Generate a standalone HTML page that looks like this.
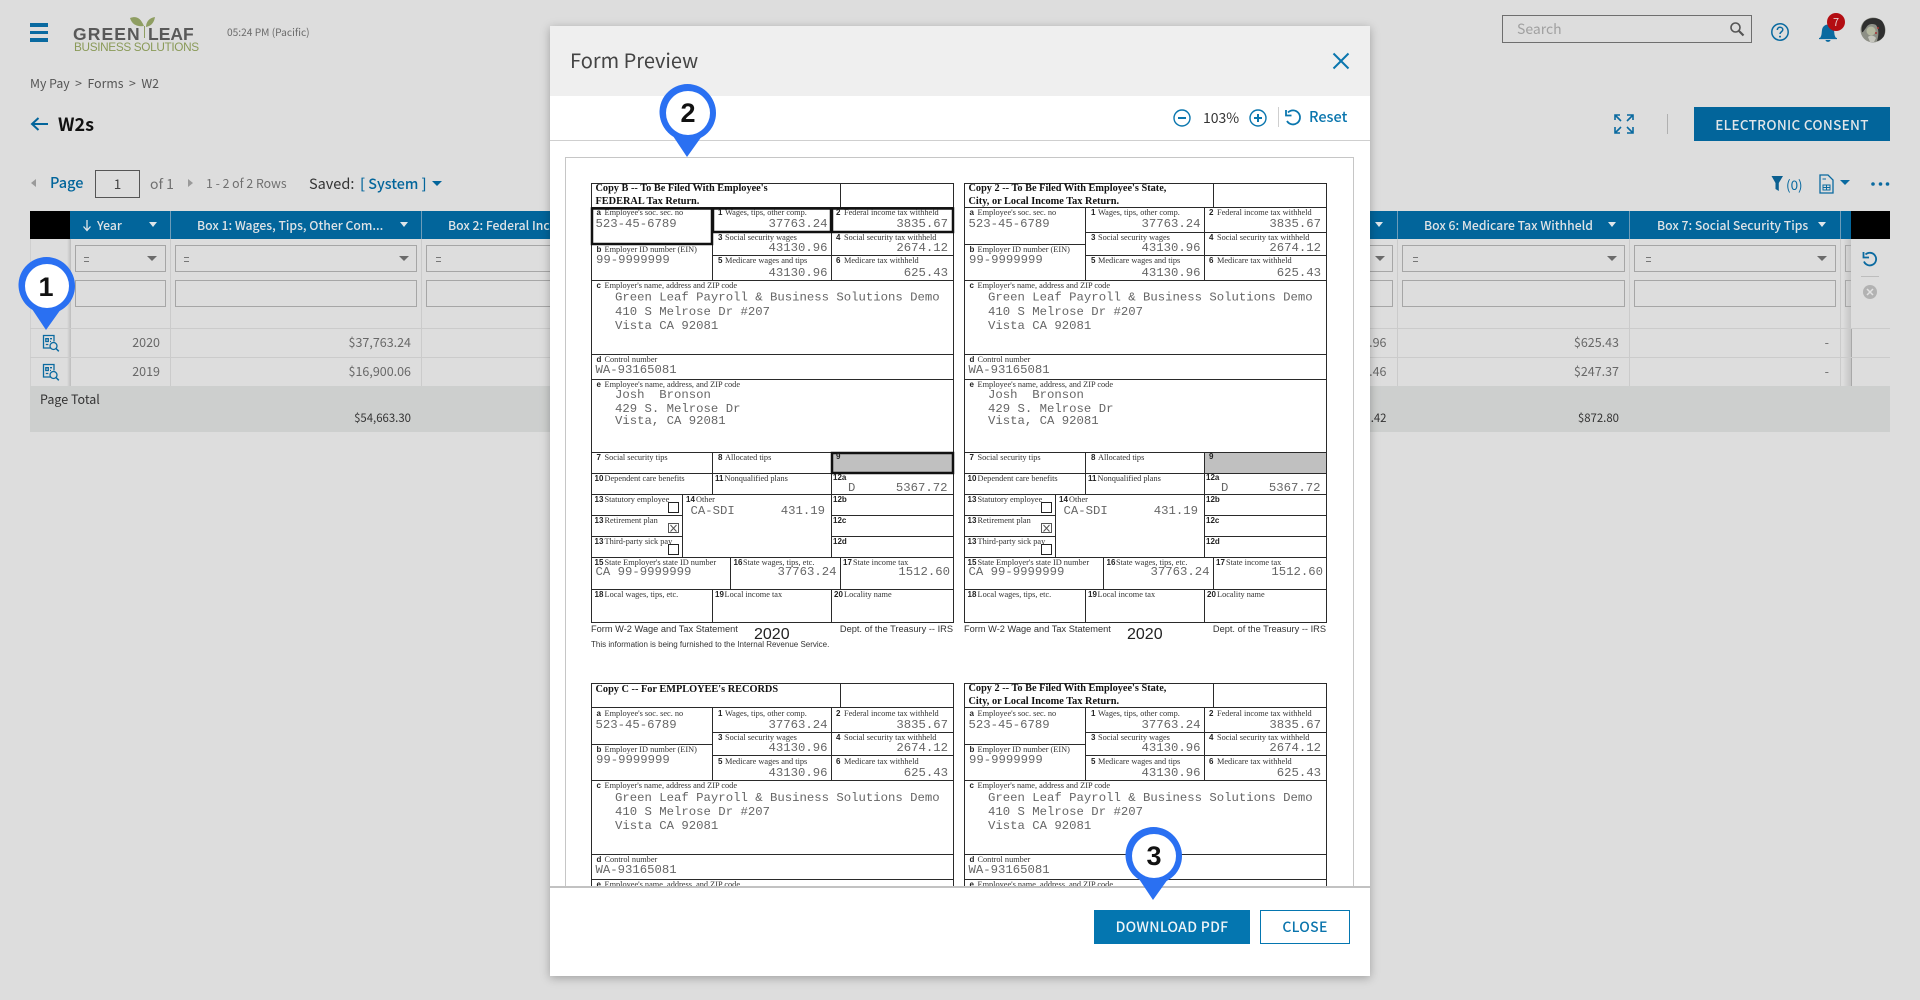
<!DOCTYPE html>
<html><head><meta charset="utf-8"><title>W2s</title>
<style>
html,body{margin:0;padding:0;width:1920px;height:1000px;overflow:hidden;background:#dddddd;}
body{position:relative;font-family:"Noto Sans CJK JP","Liberation Sans",sans-serif;color:#555;}
.t{position:absolute;white-space:nowrap;line-height:16px;height:16px;font-size:12.5px;}
.r{text-align:right;}
.a{position:absolute;}
.blue{color:#02659b;}
.hd{color:#dfe3e6;font-size:12.2px;font-weight:500;top:217px;}
.sel,.inp{position:absolute;box-sizing:border-box;border:1px solid #a6a6a6;height:27px;}
.sel{top:245px}.inp{top:280px}
.v{position:absolute;top:239px;height:147px;width:1px;background:#cbcbcb;}
.h{position:absolute;left:30px;width:1860px;height:1px;background:#cbcbcb;}
.car{position:absolute;width:0;height:0;border-left:4.5px solid transparent;border-right:4.5px solid transparent;border-top:5px solid #dfe6ea;top:222px;}
.sc{position:absolute;width:0;height:0;border-left:5px solid transparent;border-right:5px solid transparent;border-top:5.5px solid #6b6b6b;top:256px;}
.eq{position:absolute;top:257px;width:5px;height:3px;border-top:1px solid #777;border-bottom:1px solid #777;}
.d{color:#686868;font-size:12.5px;top:334px;}
.d2{color:#686868;font-size:12.5px;top:363px;}
.tot{color:#333;font-size:11.4px;top:410px;}
svg{position:absolute;overflow:visible;}
svg.f text{white-space:pre;}
.l{font:8.3px "Liberation Serif",serif;fill:#333;}
.k{font:bold 8px "Liberation Sans",sans-serif;fill:#222;}
.m{font:12.3px "Liberation Mono",monospace;fill:#666;}
.b{font:bold 10.3px "Liberation Serif",serif;fill:#111;}
.n{font:9.25px "Liberation Sans",sans-serif;fill:#333;}
.e{text-anchor:end;}
#modal{position:absolute;left:550px;top:26px;width:820px;height:950px;background:#fff;box-shadow:0 2px 9px rgba(0,0,0,.28);}
.pn{font:bold 27px "Liberation Sans",sans-serif;fill:#111;text-anchor:middle;}
</style></head><body>

<!-- top bar -->
<div class="a" style="left:30px;top:23px;width:18px;height:4px;background:#0a6aa0"></div>
<div class="a" style="left:30px;top:30.5px;width:18px;height:3.5px;background:#0a6aa0"></div>
<div class="a" style="left:30px;top:38px;width:18px;height:4px;background:#0a6aa0"></div>
<svg style="left:70px;top:14px" width="130" height="40">
<path d="M60 4C66 2 70 3 74 12C68 13 62 11 60 4Z" fill="#8f9e62"/><path d="M85 3C84 9 81 12 76 13C76 8 79 4 85 3Z" fill="#8f9e62"/>
<path d="M74.500 12V24" stroke="#8f9e62" stroke-width="1"/>
<text x="3" y="26" style="font:bold 17.500px 'Liberation Sans',sans-serif;letter-spacing:1.100px" fill="#595959">GREEN</text>
<text x="78" y="26" style="font:bold 17.500px 'Liberation Sans',sans-serif" fill="#595959">LEAF</text>
<text x="4" y="37" style="font:11.800px 'Liberation Sans',sans-serif;letter-spacing:-.35px" fill="#8a9a58">BUSINESS SOLUTIONS</text>
</svg>
<div class="t" style="left:227px;top:24px;font-size:10.200px;color:#6a6a6a">05:24 PM (Pacific)</div>

<div class="t" style="left:30px;top:75px;font-size:12.300px;color:#555">My Pay &nbsp;&gt;&nbsp; Forms &nbsp;&gt;&nbsp; W2</div>
<svg style="left:30px;top:116px" width="20" height="16"><path d="M18 8H2M8.500 2L2 8L8.500 14" fill="none" stroke="#02659b" stroke-width="2"/></svg>
<div class="t" style="left:58px;top:116px;font-size:18px;font-weight:700;color:#111">W2s</div>

<!-- right top -->
<div class="a" style="left:1502px;top:15px;width:250px;height:28px;box-sizing:border-box;border:1.500px solid #6e6e6e"></div>
<div class="t" style="left:1517px;top:21px;font-size:14px;color:#a0a0a0">Search</div>
<svg style="left:1729px;top:21px" width="16" height="16"><circle cx="6.500" cy="6.500" r="4.500" fill="none" stroke="#555" stroke-width="1.600"/><path d="M10 10L14.500 14.500" stroke="#555" stroke-width="2.200"/></svg>
<svg style="left:1770px;top:22px" width="20" height="20"><circle cx="10" cy="10" r="8.200" fill="none" stroke="#0a6aa0" stroke-width="1.500"/><path d="M7.300 8C7.300 6 8.700 5.300 10 5.300C11.500 5.300 12.800 6.200 12.800 7.700C12.800 9.700 10 9.800 10 12" fill="none" stroke="#0a6aa0" stroke-width="1.500"/><circle cx="10" cy="14.600" r="1" fill="#0a6aa0"/></svg>
<svg style="left:1818px;top:20px" width="20" height="24"><path d="M2 18C4 15 3.500 13 4 10C4.500 6.500 7 4.500 10 4.500C13 4.500 15.500 6.500 16 10C16.500 13 16 15 18 18Z" fill="#0a6aa0"/><path d="M1 18.500H19" stroke="#0a6aa0" stroke-width="1.300"/><path d="M7.500 20H12.500C12.300 22.500 7.700 22.500 7.500 20Z" fill="#0a6aa0"/></svg>
<div class="a" style="left:1827px;top:13px;width:18px;height:18px;border-radius:50%;background:#b30d12;color:#e8c9c9;font-size:11px;line-height:18px;text-align:center">7</div>
<svg style="left:1860px;top:17px" width="26" height="26"><circle cx="13" cy="13" r="12.500" fill="#8d8f86"/><path d="M4 5C8 0 18 0 22 4C25 8 26 14 24 19C22 22 19 24 17 24C19 18 19 12 16 8C12 6 8 7 6 11C4 13 3 16 2 15C1 11 2 8 4 5Z" fill="#2f2f2f"/><circle cx="11" cy="14" r="4.500" fill="#b4b8a0"/><path d="M8 20C10 18 14 18 16 21L14 25H10Z" fill="#c4c4bc"/><circle cx="18" cy="11" r="1" fill="#a33"/><circle cx="16" cy="16" r="1" fill="#a33"/></svg>

<svg style="left:1614px;top:114px" width="20" height="20" fill="none" stroke="#0a6aa0" stroke-width="1.600"><path d="M1 6V1H6M1 1L7 7M13 1H19V6M19 1L13 7M1 13V19H6M1 19L7 13M19 13V19H13M19 19L13 13"/></svg>
<div class="a" style="left:1667px;top:114px;width:1px;height:20px;background:#b0b0b0"></div>
<div class="a" style="left:1694px;top:107px;width:196px;height:34px;background:#02659b;color:#e2e6e9;font-size:13.500px;font-weight:500;line-height:34px;text-align:center;letter-spacing:.3px">ELECTRONIC CONSENT</div>

<!-- pagination -->
<div class="a" style="left:31px;top:179px;border-right:5px solid #9a9a9a;border-top:4.500px solid transparent;border-bottom:4.500px solid transparent"></div>
<div class="t blue" style="left:50px;top:175px;font-size:14.500px;font-weight:500">Page</div>
<div class="a" style="left:95px;top:170px;width:45px;height:28px;box-sizing:border-box;border:1px solid #555;text-align:center;font-size:13.500px;line-height:24px;color:#444">1</div>
<div class="t" style="left:150px;top:176px;font-size:14px;color:#707070">of 1</div>
<div class="a" style="left:188px;top:179px;border-left:5px solid #9a9a9a;border-top:4.500px solid transparent;border-bottom:4.500px solid transparent"></div>
<div class="t" style="left:206px;top:175px;font-size:12.300px;color:#707070">1 - 2 of 2 Rows</div>
<div class="t" style="left:309px;top:176px;font-size:14.500px;color:#333">Saved:</div>
<div class="t blue" style="left:360px;top:176px;font-size:14.300px;font-weight:500">[ System ]</div>
<div class="a" style="left:432px;top:181px;border-top:5.500px solid #02659b;border-left:5px solid transparent;border-right:5px solid transparent"></div>

<svg style="left:1771px;top:175px" width="13" height="17"><path d="M.5 1H12L7.800 8V16L4.500 14V8Z" fill="#0a5f90"/></svg>
<div class="t" style="left:1786px;top:176px;font-size:13.500px;color:#0a6aa0">(0)</div>
<svg style="left:1819px;top:174px" width="15" height="20"><path d="M1 1H9L14 6V19H1Z" fill="none" stroke="#0a6aa0" stroke-width="1.300"/><path d="M4 11H11V16H4ZM7.500 11V16M4 13.500H11M3.500 5H7" fill="none" stroke="#0a6aa0" stroke-width="1"/></svg>
<div class="a" style="left:1840px;top:180px;border-top:5.500px solid #0a6aa0;border-left:5px solid transparent;border-right:5px solid transparent"></div>
<svg style="left:1871px;top:181px" width="19" height="6" fill="#0a6aa0"><circle cx="2" cy="3" r="1.800"/><circle cx="9.500" cy="3" r="1.800"/><circle cx="16.500" cy="3" r="1.800"/></svg>

<!-- table -->
<div class="a" style="left:30px;top:211px;width:1860px;height:28px;background:#02659b"></div>
<div class="a" style="left:30px;top:211px;width:40px;height:28px;background:#000"></div>
<div class="a" style="left:1851px;top:211px;width:39px;height:28px;background:#000"></div>
<div class="a" style="left:170px;top:211px;width:1px;height:28px;background:#6d9cb9"></div>
<div class="a" style="left:421px;top:211px;width:1px;height:28px;background:#6d9cb9"></div>
<div class="a" style="left:1397px;top:211px;width:1px;height:28px;background:#6d9cb9"></div>
<div class="a" style="left:1629px;top:211px;width:1px;height:28px;background:#6d9cb9"></div>
<div class="a" style="left:1840px;top:211px;width:1px;height:28px;background:#6d9cb9"></div>

<svg style="left:82px;top:219px" width="10" height="13"><path d="M5 1V11M1.500 7.500L5 11.500L8.500 7.500" fill="none" stroke="#dfe6ea" stroke-width="1.300"/></svg>
<div class="t hd" style="left:97px">Year</div><div class="car" style="left:148.500px"></div>
<div class="t hd" style="left:197px">Box 1: Wages, Tips, Other Com...</div><div class="car" style="left:400px"></div>
<div class="t hd" style="left:448px">Box 2: Federal Income Tax</div>
<div class="car" style="left:1375px"></div>
<div class="t hd" style="left:1424px">Box 6: Medicare Tax Withheld</div><div class="car" style="left:1608px"></div>
<div class="t hd" style="left:1657px">Box 7: Social Security Tips</div><div class="car" style="left:1818px"></div>

<div class="v" style="left:170px"></div><div class="v" style="left:421px"></div><div class="v" style="left:1397px"></div><div class="v" style="left:1629px"></div><div class="v" style="left:1840px"></div>
<div class="a" style="left:67px;top:239px;width:4px;height:147px;background:linear-gradient(90deg,#dddddd,#bdbdbd)"></div>
<div class="a" style="left:1843px;top:239px;width:8px;height:147px;background:linear-gradient(90deg,#dddddd,#c4c4c4)"></div>
<div class="a" style="left:1851px;top:328px;width:1px;height:58px;background:#a8a8a8"></div>
<div class="a" style="left:30px;top:239px;width:1px;height:147px;background:#cfcfcf"></div>

<div class="sel" style="left:75px;width:91px"></div><div class="eq" style="left:84px"></div><div class="sc" style="left:147px"></div>
<div class="sel" style="left:175px;width:242px"></div><div class="eq" style="left:184px"></div><div class="sc" style="left:399px"></div>
<div class="sel" style="left:426px;width:130px"></div><div class="eq" style="left:436px"></div>
<div class="sel" style="left:1300px;width:93px"></div><div class="sc" style="left:1375px"></div>
<div class="sel" style="left:1402px;width:223px"></div><div class="eq" style="left:1413px"></div><div class="sc" style="left:1607px"></div>
<div class="sel" style="left:1634px;width:202px"></div><div class="eq" style="left:1646px"></div><div class="sc" style="left:1817px"></div>
<div class="sel" style="left:1845px;width:6px;border-right:0"></div>

<div class="inp" style="left:75px;width:91px"></div>
<div class="inp" style="left:175px;width:242px"></div>
<div class="inp" style="left:426px;width:130px"></div>
<div class="inp" style="left:1300px;width:93px"></div>
<div class="inp" style="left:1402px;width:223px"></div>
<div class="inp" style="left:1634px;width:202px"></div>
<div class="inp" style="left:1845px;width:6px;border-right:0"></div>

<div class="h" style="top:328px"></div><div class="h" style="top:357px"></div>

<svg style="left:42px;top:334px" width="18" height="18"><path d="M10 14H1.500V1.500H12V7.500M3.800 4.700H6.300V7.500H3.800ZM3.800 10.500H6.300M8 4.700H10M8 7.500H9" fill="none" stroke="#0a6aa0" stroke-width="1.300"/><circle cx="11.500" cy="12" r="3.500" fill="#dddddd" stroke="#0a6aa0" stroke-width="1.300"/><path d="M14 14.500L16.800 17.300" stroke="#0a6aa0" stroke-width="1.500"/></svg>
<svg style="left:42px;top:363px" width="18" height="18"><path d="M10 14H1.500V1.500H12V7.500M3.800 4.700H6.300V7.500H3.800ZM3.800 10.500H6.300M8 4.700H10M8 7.500H9" fill="none" stroke="#0a6aa0" stroke-width="1.300"/><circle cx="11.500" cy="12" r="3.500" fill="#dddddd" stroke="#0a6aa0" stroke-width="1.300"/><path d="M14 14.500L16.800 17.300" stroke="#0a6aa0" stroke-width="1.500"/></svg>

<div class="t r d" style="right:1760px">2020</div><div class="t r d" style="right:1509px">$37,763.24</div>
<div class="t r d" style="right:533.500px">.96</div><div class="t r d" style="right:301px">$625.43</div><div class="t r d" style="right:91px">-</div>
<div class="t r d2" style="right:1760px">2019</div><div class="t r d2" style="right:1509px">$16,900.06</div>
<div class="t r d2" style="right:533.500px">.46</div><div class="t r d2" style="right:301px">$247.37</div><div class="t r d2" style="right:91px">-</div>

<div class="a" style="left:30px;top:386px;width:1860px;height:46px;background:#cdcfce"></div>
<div class="t" style="left:40px;top:391px;font-size:12.500px;color:#333">Page Total</div>
<div class="t r tot" style="right:1509px">$54,663.30</div>
<div class="t r tot" style="right:533.500px">.42</div>
<div class="t r tot" style="right:301px">$872.80</div>

<svg style="left:1861px;top:251px" width="18" height="18"><path d="M4.500 3.500A6.300 6.300 0 1 1 3 10.500" fill="none" stroke="#0a6aa0" stroke-width="1.800"/><path d="M2.500 1V6.500H8" fill="none" stroke="#0a6aa0" stroke-width="1.800"/></svg>
<div class="a" style="left:1861px;top:276px;width:18px;height:1px;background:#bdbdbd"></div>
<svg style="left:1863px;top:285px" width="14" height="14"><circle cx="7" cy="7" r="7" fill="#b2b2b2"/><path d="M4 4L10 10M10 4L4 10" stroke="#e2e2e2" stroke-width="1.500"/></svg>

<!-- modal -->
<div id="modal">
 <div class="a" style="left:0;top:0;width:820px;height:70px;background:#efefef"></div>
 <div class="t" style="left:20px;top:23px;height:22px;line-height:22px;font-size:20px;color:#444">Form Preview</div>
 <svg style="left:782px;top:27px" width="18" height="16"><path d="M1.500 .5L16.500 15.500M16.500 .5L1.500 15.500" stroke="#0a76ae" stroke-width="2"/></svg>
 <div class="a" style="left:0;top:114px;width:820px;height:1px;background:#cfcfcf"></div>
 <svg style="left:623px;top:83px" width="18" height="18" fill="none" stroke="#0a76ae" stroke-width="1.400"><circle cx="9" cy="9" r="8"/><path d="M5 9H13" stroke-width="2"/></svg>
 <div class="t" style="left:653px;top:84px;font-size:14px;color:#333">103%</div>
 <svg style="left:699px;top:83px" width="18" height="18" fill="none" stroke="#0a76ae" stroke-width="1.400"><circle cx="9" cy="9" r="8"/><path d="M5 9H13M9 5V13" stroke-width="2"/></svg>
 <div class="a" style="left:728px;top:81px;width:1px;height:20px;background:#cfcfcf"></div>
 <svg style="left:733px;top:82px" width="20" height="20"><path d="M5 4.500A7 7 0 1 1 4 13" fill="none" stroke="#0a76ae" stroke-width="1.800"/><path d="M3 2V7.500H8.500" fill="none" stroke="#0a76ae" stroke-width="1.800"/></svg>
 <div class="t" style="left:759px;top:83px;font-size:14.500px;font-weight:500;color:#0a76ae">Reset</div>

 <!-- preview -->
 <div class="a" style="left:15px;top:131px;width:789px;height:729px;box-sizing:border-box;border:1.500px solid #c6c6c6;border-bottom:0;overflow:hidden;background:#fff">
  <!-- Form 1 -->
  <svg class="f" style="left:24.500px;top:24.500px" width="365" height="470">
   <rect x="241" y="270" width="121" height="20" fill="#c0c0c0"/>
   <path transform="translate(.5 .5)" fill="none" stroke="#2a2a2a" d="M0 0H362V439H0ZM249 0V24M0 24H362M121 24V97M0 61H121M121 49H362M121 72H362M240 24V97M0 97H362M0 171H362M0 196H362M0 269H362M0 290H362M121 269V311M240 269V374M0 311H362M0 332H91M0 353H91M240 332H362M240 353H362M91 311V374M0 374H362M139 374V406M249 374V406M0 406H362M121 406V439M240 406V439"/>
   <path fill="none" stroke="#111" stroke-width="2.500" d="M1 25.500H121V61H1ZM122 25.500H240V49H122ZM241 25.500H362V49H241ZM241 270H362V290H241Z"/>
   <text class="b" x="4.500" y="8">Copy B -- To Be Filed With Employee's</text><text class="b" x="4.500" y="21">FEDERAL Tax Return.</text>
   <text class="k" x="5.500" y="32">a</text><text class="l" x="13.500" y="32">Employee's soc. sec. no</text><text class="k" x="127" y="32">1</text><text class="l" x="134" y="32">Wages, tips, other comp.</text><text class="k" x="245" y="32">2</text><text class="l" x="253" y="32">Federal income tax withheld</text>
   <text class="m" x="4.500" y="44">523-45-6789</text><text class="m e" x="236.500" y="44">37763.24</text><text class="m e" x="357" y="44">3835.67</text>
   <text class="k" x="127" y="57">3</text><text class="l" x="134" y="57">Social security wages</text><text class="k" x="245" y="57">4</text><text class="l" x="253" y="57">Social security tax withheld</text>
   <text class="m e" x="236.500" y="68">43130.96</text><text class="m e" x="357" y="68">2674.12</text>
   <text class="k" x="5.500" y="69">b</text><text class="l" x="13.500" y="69">Employer ID number (EIN)</text><text class="m" x="5" y="80">99-9999999</text>
   <text class="k" x="127" y="80">5</text><text class="l" x="134" y="80">Medicare wages and tips</text><text class="k" x="245" y="80">6</text><text class="l" x="253" y="80">Medicare tax withheld</text>
   <text class="m e" x="236.500" y="93">43130.96</text><text class="m e" x="357" y="93">625.43</text>
   <text class="k" x="5.500" y="105">c</text><text class="l" x="13.500" y="105">Employer's name, address and ZIP code</text>
   <text class="m" x="24" y="117.500">Green Leaf Payroll &amp; Business Solutions Demo</text><text class="m" x="24" y="132">410 S Melrose Dr #207</text><text class="m" x="24" y="146">Vista CA 92081</text>
   <text class="k" x="5.500" y="179">d</text><text class="l" x="13.500" y="179">Control number</text><text class="m" x="4.500" y="190">WA-93165081</text>
   <text class="k" x="5.500" y="204">e</text><text class="l" x="13.500" y="204">Employee's name, address, and ZIP code</text>
   <text class="m" x="24" y="215">Josh  Bronson</text><text class="m" x="24" y="229">429 S. Melrose Dr</text><text class="m" x="24" y="241">Vista, CA 92081</text>
   <text class="k" x="5.500" y="277">7</text><text class="l" x="13.500" y="277">Social security tips</text><text class="k" x="127" y="277">8</text><text class="l" x="134" y="277">Allocated tips</text><text class="k" x="245" y="276">9</text>
   <text class="k" x="3.500" y="298">10</text><text class="l" x="13.500" y="298">Dependent care benefits</text><text class="k" x="124" y="298">11</text><text class="l" x="133.500" y="298">Nonqualified plans</text><text class="k" x="242" y="297">12a</text>
   <text class="m" x="257" y="308">D</text><text class="m e" x="356.500" y="308">5367.72</text>
   <text class="k" x="3.500" y="319">13</text><text class="l" x="13.500" y="319">Statutory employee</text><text class="k" x="95" y="319">14</text><text class="l" x="105" y="319">Other</text><text class="k" x="242" y="319">12b</text>
   <rect x="77.500" y="319.500" width="10" height="10" fill="#fff" stroke="#222"/>
   <text class="m" x="99.500" y="331">CA-SDI</text><text class="m e" x="234" y="331">431.19</text>
   <text class="k" x="3.500" y="340">13</text><text class="l" x="13.500" y="340">Retirement plan</text><text class="k" x="242" y="340">12c</text>
   <rect x="77.500" y="340.500" width="10" height="9" fill="#fff" stroke="#555"/><path d="M79.500 342L85.500 348.500M85.500 342L79.500 348.500" stroke="#555"/>
   <text class="k" x="3.500" y="361">13</text><text class="l" x="13.500" y="361">Third-party sick pay</text><text class="k" x="242" y="361">12d</text>
   <rect x="77.500" y="361.500" width="10" height="10" fill="#fff" stroke="#222"/>
   <text class="k" x="3.500" y="382">15</text><text class="l" x="13.500" y="382">State Employer's state ID number</text><text class="k" x="142.500" y="382">16</text><text class="l" x="152" y="382">State wages, tips, etc.</text><text class="k" x="252" y="382">17</text><text class="l" x="262" y="382">State income tax</text>
   <text class="m" x="4.500" y="392">CA 99-9999999</text><text class="m e" x="245.500" y="392">37763.24</text><text class="m e" x="359" y="392">1512.60</text>
   <text class="k" x="3.500" y="414">18</text><text class="l" x="13.500" y="414">Local wages, tips, etc.</text><text class="k" x="124" y="414">19</text><text class="l" x="133.500" y="414">Local income tax</text><text class="k" x="243" y="414">20</text><text class="l" x="253" y="414">Locality name</text>
   <text class="n" x="0" y="449">Form W-2 Wage and Tax Statement</text><text x="163" y="456" style="font:16px 'Liberation Sans',sans-serif" fill="#222">2020</text><text class="n e" x="362" y="449">Dept. of the Treasury -- IRS</text>
   <text class="n" x="0" y="464" style="font-size:8px">This information is being furnished to the Internal Revenue Service.</text>
  </svg>
  <!-- Form 2 -->
  <svg class="f" style="left:397.500px;top:24.500px" width="365" height="470">
   <rect x="241" y="270" width="121" height="20" fill="#c0c0c0"/>
   <path transform="translate(.5 .5)" fill="none" stroke="#2a2a2a" d="M0 0H362V439H0ZM249 0V24M0 24H362M121 24V97M0 61H121M121 49H362M121 72H362M240 24V97M0 97H362M0 171H362M0 196H362M0 269H362M0 290H362M121 269V311M240 269V374M0 311H362M0 332H91M0 353H91M240 332H362M240 353H362M91 311V374M0 374H362M139 374V406M249 374V406M0 406H362M121 406V439M240 406V439"/>
   <text class="b" x="4.500" y="8">Copy 2 -- To Be Filed With Employee's State,</text><text class="b" x="4.500" y="21">City, or Local Income Tax Return.</text>
   <text class="k" x="5.500" y="32">a</text><text class="l" x="13.500" y="32">Employee's soc. sec. no</text><text class="k" x="127" y="32">1</text><text class="l" x="134" y="32">Wages, tips, other comp.</text><text class="k" x="245" y="32">2</text><text class="l" x="253" y="32">Federal income tax withheld</text>
   <text class="m" x="4.500" y="44">523-45-6789</text><text class="m e" x="236.500" y="44">37763.24</text><text class="m e" x="357" y="44">3835.67</text>
   <text class="k" x="127" y="57">3</text><text class="l" x="134" y="57">Social security wages</text><text class="k" x="245" y="57">4</text><text class="l" x="253" y="57">Social security tax withheld</text>
   <text class="m e" x="236.500" y="68">43130.96</text><text class="m e" x="357" y="68">2674.12</text>
   <text class="k" x="5.500" y="69">b</text><text class="l" x="13.500" y="69">Employer ID number (EIN)</text><text class="m" x="5" y="80">99-9999999</text>
   <text class="k" x="127" y="80">5</text><text class="l" x="134" y="80">Medicare wages and tips</text><text class="k" x="245" y="80">6</text><text class="l" x="253" y="80">Medicare tax withheld</text>
   <text class="m e" x="236.500" y="93">43130.96</text><text class="m e" x="357" y="93">625.43</text>
   <text class="k" x="5.500" y="105">c</text><text class="l" x="13.500" y="105">Employer's name, address and ZIP code</text>
   <text class="m" x="24" y="117.500">Green Leaf Payroll &amp; Business Solutions Demo</text><text class="m" x="24" y="132">410 S Melrose Dr #207</text><text class="m" x="24" y="146">Vista CA 92081</text>
   <text class="k" x="5.500" y="179">d</text><text class="l" x="13.500" y="179">Control number</text><text class="m" x="4.500" y="190">WA-93165081</text>
   <text class="k" x="5.500" y="204">e</text><text class="l" x="13.500" y="204">Employee's name, address, and ZIP code</text>
   <text class="m" x="24" y="215">Josh  Bronson</text><text class="m" x="24" y="229">429 S. Melrose Dr</text><text class="m" x="24" y="241">Vista, CA 92081</text>
   <text class="k" x="5.500" y="277">7</text><text class="l" x="13.500" y="277">Social security tips</text><text class="k" x="127" y="277">8</text><text class="l" x="134" y="277">Allocated tips</text><text class="k" x="245" y="276">9</text>
   <text class="k" x="3.500" y="298">10</text><text class="l" x="13.500" y="298">Dependent care benefits</text><text class="k" x="124" y="298">11</text><text class="l" x="133.500" y="298">Nonqualified plans</text><text class="k" x="242" y="297">12a</text>
   <text class="m" x="257" y="308">D</text><text class="m e" x="356.500" y="308">5367.72</text>
   <text class="k" x="3.500" y="319">13</text><text class="l" x="13.500" y="319">Statutory employee</text><text class="k" x="95" y="319">14</text><text class="l" x="105" y="319">Other</text><text class="k" x="242" y="319">12b</text>
   <rect x="77.500" y="319.500" width="10" height="10" fill="#fff" stroke="#222"/>
   <text class="m" x="99.500" y="331">CA-SDI</text><text class="m e" x="234" y="331">431.19</text>
   <text class="k" x="3.500" y="340">13</text><text class="l" x="13.500" y="340">Retirement plan</text><text class="k" x="242" y="340">12c</text>
   <rect x="77.500" y="340.500" width="10" height="9" fill="#fff" stroke="#555"/><path d="M79.500 342L85.500 348.500M85.500 342L79.500 348.500" stroke="#555"/>
   <text class="k" x="3.500" y="361">13</text><text class="l" x="13.500" y="361">Third-party sick pay</text><text class="k" x="242" y="361">12d</text>
   <rect x="77.500" y="361.500" width="10" height="10" fill="#fff" stroke="#222"/>
   <text class="k" x="3.500" y="382">15</text><text class="l" x="13.500" y="382">State Employer's state ID number</text><text class="k" x="142.500" y="382">16</text><text class="l" x="152" y="382">State wages, tips, etc.</text><text class="k" x="252" y="382">17</text><text class="l" x="262" y="382">State income tax</text>
   <text class="m" x="4.500" y="392">CA 99-9999999</text><text class="m e" x="245.500" y="392">37763.24</text><text class="m e" x="359" y="392">1512.60</text>
   <text class="k" x="3.500" y="414">18</text><text class="l" x="13.500" y="414">Local wages, tips, etc.</text><text class="k" x="124" y="414">19</text><text class="l" x="133.500" y="414">Local income tax</text><text class="k" x="243" y="414">20</text><text class="l" x="253" y="414">Locality name</text>
   <text class="n" x="0" y="449">Form W-2 Wage and Tax Statement</text><text x="163" y="456" style="font:16px 'Liberation Sans',sans-serif" fill="#222">2020</text><text class="n e" x="362" y="449">Dept. of the Treasury -- IRS</text>
  </svg>
  <!-- Form 3 -->
  <svg class="f" style="left:24.500px;top:525.200px;overflow:hidden" width="365" height="206">
   <path transform="translate(.5 .5)" fill="none" stroke="#2a2a2a" d="M0 206V0H362V206M249 0V24M0 24H362M121 24V97M0 61H121M121 49H362M121 72H362M240 24V97M0 97H362M0 171H362M0 196H362"/>
   <text class="b" x="4.500" y="9">Copy C -- For EMPLOYEE's RECORDS</text>
   <text class="k" x="5.500" y="33">a</text><text class="l" x="13.500" y="33">Employee's soc. sec. no</text><text class="k" x="127" y="33">1</text><text class="l" x="134" y="33">Wages, tips, other comp.</text><text class="k" x="245" y="33">2</text><text class="l" x="253" y="33">Federal income tax withheld</text>
   <text class="m" x="4.500" y="45">523-45-6789</text><text class="m e" x="236.500" y="45">37763.24</text><text class="m e" x="357" y="45">3835.67</text>
   <text class="k" x="127" y="57">3</text><text class="l" x="134" y="57">Social security wages</text><text class="k" x="245" y="57">4</text><text class="l" x="253" y="57">Social security tax withheld</text>
   <text class="m e" x="236.500" y="68">43130.96</text><text class="m e" x="357" y="68">2674.12</text>
   <text class="k" x="5.500" y="69">b</text><text class="l" x="13.500" y="69">Employer ID number (EIN)</text><text class="m" x="5" y="80">99-9999999</text>
   <text class="k" x="127" y="81">5</text><text class="l" x="134" y="81">Medicare wages and tips</text><text class="k" x="245" y="81">6</text><text class="l" x="253" y="81">Medicare tax withheld</text>
   <text class="m e" x="236.500" y="93">43130.96</text><text class="m e" x="357" y="93">625.43</text>
   <text class="k" x="5.500" y="105">c</text><text class="l" x="13.500" y="105">Employer's name, address and ZIP code</text>
   <text class="m" x="24" y="118">Green Leaf Payroll &amp; Business Solutions Demo</text><text class="m" x="24" y="132">410 S Melrose Dr #207</text><text class="m" x="24" y="146">Vista CA 92081</text>
   <text class="k" x="5.500" y="179">d</text><text class="l" x="13.500" y="179">Control number</text><text class="m" x="4.500" y="190">WA-93165081</text>
   <text class="k" x="5.500" y="204">e</text><text class="l" x="13.500" y="204">Employee's name, address, and ZIP code</text>
  </svg>
  <!-- Form 4 -->
  <svg class="f" style="left:397.500px;top:525.200px;overflow:hidden" width="365" height="206">
   <path transform="translate(.5 .5)" fill="none" stroke="#2a2a2a" d="M0 206V0H362V206M249 0V24M0 24H362M121 24V97M0 61H121M121 49H362M121 72H362M240 24V97M0 97H362M0 171H362M0 196H362"/>
   <text class="b" x="4.500" y="8">Copy 2 -- To Be Filed With Employee's State,</text><text class="b" x="4.500" y="21">City, or Local Income Tax Return.</text>
   <text class="k" x="5.500" y="33">a</text><text class="l" x="13.500" y="33">Employee's soc. sec. no</text><text class="k" x="127" y="33">1</text><text class="l" x="134" y="33">Wages, tips, other comp.</text><text class="k" x="245" y="33">2</text><text class="l" x="253" y="33">Federal income tax withheld</text>
   <text class="m" x="4.500" y="45">523-45-6789</text><text class="m e" x="236.500" y="45">37763.24</text><text class="m e" x="357" y="45">3835.67</text>
   <text class="k" x="127" y="57">3</text><text class="l" x="134" y="57">Social security wages</text><text class="k" x="245" y="57">4</text><text class="l" x="253" y="57">Social security tax withheld</text>
   <text class="m e" x="236.500" y="68">43130.96</text><text class="m e" x="357" y="68">2674.12</text>
   <text class="k" x="5.500" y="69">b</text><text class="l" x="13.500" y="69">Employer ID number (EIN)</text><text class="m" x="5" y="80">99-9999999</text>
   <text class="k" x="127" y="81">5</text><text class="l" x="134" y="81">Medicare wages and tips</text><text class="k" x="245" y="81">6</text><text class="l" x="253" y="81">Medicare tax withheld</text>
   <text class="m e" x="236.500" y="93">43130.96</text><text class="m e" x="357" y="93">625.43</text>
   <text class="k" x="5.500" y="105">c</text><text class="l" x="13.500" y="105">Employer's name, address and ZIP code</text>
   <text class="m" x="24" y="118">Green Leaf Payroll &amp; Business Solutions Demo</text><text class="m" x="24" y="132">410 S Melrose Dr #207</text><text class="m" x="24" y="146">Vista CA 92081</text>
   <text class="k" x="5.500" y="179">d</text><text class="l" x="13.500" y="179">Control number</text><text class="m" x="4.500" y="190">WA-93165081</text>
   <text class="k" x="5.500" y="204">e</text><text class="l" x="13.500" y="204">Employee's name, address, and ZIP code</text>
  </svg>
 </div>

 <!-- footer -->
 <div class="a" style="left:0;top:860px;width:820px;height:2px;background:#c2c2c2"></div>
 <div class="a" style="left:544px;top:884px;width:156px;height:34px;background:#0476b0;color:#eef4f8;font-size:14px;font-weight:500;line-height:34px;text-align:center;letter-spacing:.3px">DOWNLOAD PDF</div>
 <div class="a" style="left:710px;top:884px;width:90px;height:34px;box-sizing:border-box;border:1px solid #0476b0;color:#0b75ad;font-size:14px;font-weight:500;line-height:32px;text-align:center;letter-spacing:.3px">CLOSE</div>
</div>

<!-- callout pins -->
<svg style="left:0;top:0" width="1920" height="1000">
 <g><path d="M46 330L32 309A28 28 0 1 1 61 309Z" fill="#2a70f2"/><circle cx="47" cy="286" r="28" fill="#2a70f2"/><circle cx="47" cy="286" r="22" fill="#fff"/><text class="pn" x="46" y="296">1</text></g>
 <g><path d="M687 157L673 136A28 28 0 1 1 702 136Z" fill="#2a70f2"/><circle cx="688" cy="113" r="28" fill="#2a70f2"/><circle cx="688" cy="113" r="22" fill="#fff"/><text class="pn" x="688" y="122">2</text></g>
 <g><path d="M1153 900L1139 879A28 28 0 1 1 1168 879Z" fill="#2a70f2"/><circle cx="1154" cy="856" r="28" fill="#2a70f2"/><circle cx="1154" cy="856" r="22" fill="#fff"/><text class="pn" x="1154" y="865">3</text></g>
</svg>
</body></html>
